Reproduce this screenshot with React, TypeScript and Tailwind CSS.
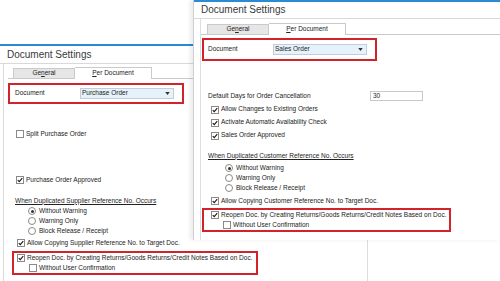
import React from "react";

const font = { fontFamily: '"Liberation Sans", Arial, sans-serif' };

function CB({ checked }: { checked?: boolean }) {
  return (
    <span className="w-[8px] h-[8px] border border-[#8a8a8a] bg-white flex items-center justify-center shrink-0">
      {checked && (
        <svg viewBox="0 0 8 8" className="w-[6px] h-[6px]">
          <path d="M1 4.2 L3 6.2 L7 1.5" stroke="#1a1a1a" strokeWidth="1.5" fill="none" />
        </svg>
      )}
    </span>
  );
}

function Radio({ sel }: { sel?: boolean }) {
  return (
    <span className="w-[8px] h-[8px] rounded-full border border-[#8a8a8a] bg-white flex items-center justify-center shrink-0">
      {sel && <span className="w-[3px] h-[3px] rounded-full bg-[#333]" />}
    </span>
  );
}

function CRow({ checked, label, pl, h = "h-[10px]" }: { checked?: boolean; label: string; pl: string; h?: string }) {
  return (
    <div className={`flex items-center gap-[2px] ${h} ${pl}`}>
      <CB checked={checked} />
      <span className="whitespace-nowrap">{label}</span>
    </div>
  );
}

function RRow({ sel, label }: { sel?: boolean; label: string }) {
  return (
    <div className="flex items-center gap-[3px] h-[10px]">
      <Radio sel={sel} />
      <span className="whitespace-nowrap">{label}</span>
    </div>
  );
}

function Dropdown({ value }: { value: string }) {
  return (
    <div className="w-[94px] h-[11px] bg-[#e6f2fb] border border-[#c4cdd6] flex items-center justify-between pl-[1px] pr-[3px]">
      <span className="whitespace-nowrap">{value}</span>
      <svg viewBox="0 0 6 4" className="w-[5px] h-[3px]">
        <path d="M0 0 H6 L3 4 Z" fill="#333" />
      </svg>
    </div>
  );
}

function Tabs() {
  return (
    <div className="flex items-end h-full">
      <div className="w-[62px] h-[10px] bg-[#e6e6e6] border border-[#cacaca] border-b-0 flex items-center justify-center">
        <span>
          Ge<span className="underline">n</span>eral
        </span>
      </div>
      <div className="w-[77px] h-[12px] bg-white border border-[#cacaca] border-b-0 border-l-0 flex items-center justify-center relative -mb-px pb-px">
        <span>
          <span className="underline">P</span>er Document
        </span>
      </div>
    </div>
  );
}

function BackWindow() {
  return (
    <div className="absolute left-0 top-[44px] w-[368px] h-[237px] bg-white border-r border-[#dcdcdc] flex flex-col">
      <div className="h-[2px] bg-[#2a8ad4]" />
      <div className="h-[18px] border-b border-[#d9d9d9] flex items-center pl-[7px] text-[10px] text-[#3a3a3a]">
        Document Settings
      </div>
      <div className="ml-[3px] border-l border-[#d9d9d9] flex-1 flex flex-col">
        <div className="h-[14px] pl-[9px] pt-[2px]">
          <Tabs />
        </div>
        <div className="ml-[4px] border-t border-[#cacaca] flex flex-col">
          <div className="mt-[4px] w-[176px] h-[21px] border-2 border-[#d2232a] flex items-center pl-[5px]">
            <span className="w-[65px]">Document</span>
            <Dropdown value="Purchase Order" />
          </div>
          <div className="mt-[25px]">
            <CRow label="Split Purchase Order" pl="pl-[8px]" />
          </div>
          <div className="mt-[36px]">
            <CRow checked label="Purchase Order Approved" pl="pl-[8px]" />
          </div>
          <div className="mt-[11px] h-[10px] pl-[7px] flex items-center">
            <span className="underline whitespace-nowrap">When Duplicated Supplier Reference No. Occurs</span>
          </div>
          <div className="pl-[20px] flex flex-col">
            <RRow sel label="Without Warning" />
            <RRow label="Warning Only" />
            <RRow label="Block Release / Receipt" />
          </div>
          <div className="mt-[2px]">
            <CRow checked label="Allow Copying Supplier Reference No. to Target Doc." pl="pl-[9px]" />
          </div>
          <div className="mt-[3px] ml-[4px] w-[246px] h-[24px] border-2 border-[#d2232a] flex flex-col">
            <CRow checked label="Reopen Doc. by Creating Returns/Goods Returns/Credit Notes Based on Doc." pl="pl-[3px]" />
            <CRow label="Without User Confirmation" pl="pl-[15px]" />
          </div>
        </div>
      </div>
    </div>
  );
}

function FrontWindow() {
  return (
    <div className="absolute left-[193px] top-0 w-[307px] h-[240px] bg-white border-l border-[#cfcfcf] shadow-[-3px_0_4px_rgba(0,0,0,0.08)] flex flex-col">
      <div className="h-[2px] bg-[#2a8ad4]" />
      <div className="h-[17px] border-b border-[#d9d9d9] flex items-center pl-[7px] text-[10px] text-[#3a3a3a]">
        Document Settings
      </div>
      <div className="ml-[6px] border-l border-[#dedede] flex-1 flex flex-col">
        <div className="h-[15px] pl-[6px] pt-[4px]">
          <Tabs />
        </div>
        <div className="border-t border-[#cacaca] flex flex-col">
          <div className="mt-[3px] ml-[1px] w-[175px] h-[23px] border-2 border-[#d2232a] flex items-center pl-[4px]">
            <span className="w-[65px]">Document</span>
            <Dropdown value="Sales Order" />
          </div>
          <div className="mt-[30px] h-[10px] pl-[7px] flex items-center">
            <span className="w-[162px] whitespace-nowrap">Default Days for Order Cancellation</span>
            <div className="w-[53px] h-[10px] border border-[#c8c8c8] bg-white flex items-center pl-[2px]">30</div>
          </div>
          <div className="mt-[2px] flex flex-col">
            <CRow checked label="Allow Changes to Existing Orders" pl="pl-[10px]" h="h-[13px]" />
            <CRow checked label="Activate Automatic Availability Check" pl="pl-[10px]" h="h-[13px]" />
            <CRow checked label="Sales Order Approved" pl="pl-[10px]" h="h-[13px]" />
          </div>
          <div className="mt-[9px] h-[10px] pl-[7px] flex items-center">
            <span className="underline whitespace-nowrap">When Duplicated Customer Reference No. Occurs</span>
          </div>
          <div className="mt-[2px] pl-[24px] flex flex-col">
            <RRow sel label="Without Warning" />
            <RRow label="Warning Only" />
            <RRow label="Block Release / Receipt" />
          </div>
          <div className="mt-[3px]">
            <CRow checked label="Allow Copying Customer Reference No. to Target Doc." pl="pl-[10px]" />
          </div>
          <div className="mt-[2px] ml-[1px] w-[249px] h-[24px] border-2 border-[#d2232a] flex flex-col">
            <CRow checked label="Reopen Doc. by Creating Returns/Goods Returns/Credit Notes Based on Doc." pl="pl-[7px]" />
            <CRow label="Without User Confirmation" pl="pl-[19px]" />
          </div>
        </div>
      </div>
    </div>
  );
}

export default function App() {
  return (
    <div className="relative w-[500px] h-[281px] bg-white overflow-hidden text-[6.5px] text-[#222] leading-none" style={font}>
      <BackWindow />
      <FrontWindow />
    </div>
  );
}
